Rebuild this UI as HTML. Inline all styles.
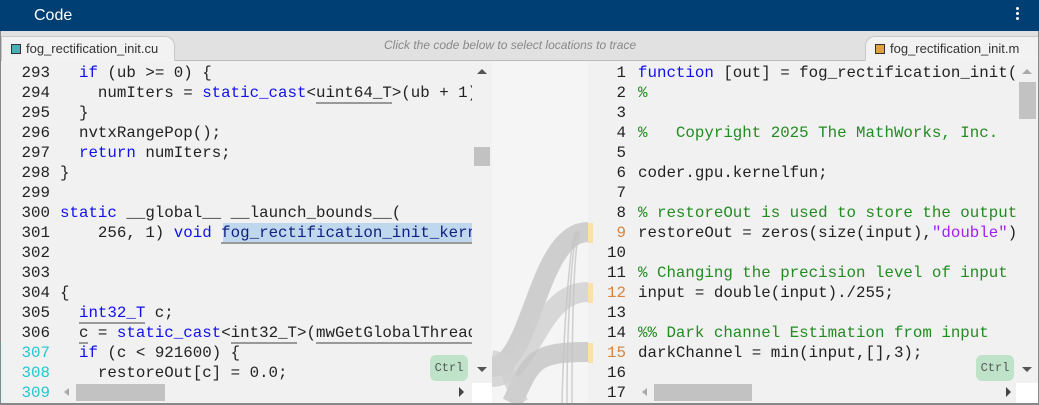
<!DOCTYPE html>
<html><head><style>
*{margin:0;padding:0;box-sizing:border-box}
body{width:1039px;height:405px;overflow:hidden;background:#f0f0f0;font-family:"Liberation Sans",sans-serif;position:relative}
.hdr{position:absolute;left:0;top:0;width:1039px;height:31px;background:#003f73;color:#fff;font-size:16px;padding:7px 0 0 34px}
.dots{position:absolute;right:20px;top:7px;width:3px}
.dots i{display:block;width:3px;height:3px;background:#fff;border-radius:50%;margin-bottom:2px}
.tabbar{position:absolute;left:0;top:31px;width:1039px;height:30px;background:#e1e1e1;border-bottom:1px solid #bbb}
.tab{position:absolute;top:36px;height:25px;background:#f2f2f2;border:1px solid #c8c8c8;border-bottom:none;border-radius:0 10px 0 0;font-size:13px;color:#333;padding:4px 0 0 9px}
.tab b{display:inline-block;width:10px;height:10px;border:1px solid #333;margin-right:5px;vertical-align:-1px}
.hint{position:absolute;left:384px;top:38px;font-size:12px;font-style:italic;color:#888}
.pane{position:absolute;top:61px;height:342px;overflow:hidden;background:#f1f1f1}
.ln{position:absolute;font-family:"Liberation Mono",monospace;font-size:15.8px;line-height:20px;white-space:pre;color:#222}
.num{text-align:right}
.k{color:#1010ee}.c{color:#228b22}.s{color:#a020f0}.o{color:#d9823b}.t{color:#20c8d0}
.u{border-bottom:2px solid #999}
.mid{position:absolute;left:492px;top:61px;width:96px;height:342px;background:#f5f5f5}
.sb{position:absolute;background:#c2c2c2}
.ctrl{position:absolute;width:38px;height:26px;background:#bfe3c8;border-radius:6px;font-family:"Liberation Mono",monospace;font-size:12px;color:#555;text-align:center;line-height:26px}
.tri{position:absolute;width:0;height:0}
</style></head><body>
<div class="hdr">Code<div class="dots"><i></i><i></i><i></i></div></div>
<div class="tabbar"></div>
<div class="tab" style="left:1px;width:174px"><b style="background:#4ab0b8"></b>fog_rectification_init.cu</div>
<div class="hint">Click the code below to select locations to trace</div>
<div class="tab" style="left:865px;width:174px;border-radius:10px 0 0 0"><b style="background:#e0a040"></b>fog_rectification_init.m</div>

<div class="pane" style="left:0;width:492px">
<div style="position:absolute;left:0;top:282px;width:4px;height:60px;background:#dff6f8"></div>
<div class="ln num" style="left:0;top:2px;width:50px">293
294
295
296
297
298
299
300
301
302
303
304
305
306
<span class="t">307
308
309</span></div>
<div style="position:absolute;left:60px;top:0;width:412px;height:322px;overflow:hidden">
<div style="position:absolute;left:163px;top:162px;width:250px;height:20px;background:#c0d8ee"></div>
<div class="ln" style="left:0;top:2px">  <span class="k">if</span> (ub &gt;= 0) {
    numIters = <span class="k">static_cast</span>&lt;<span class="u">uint64_T</span>&gt;(ub + 1);
  }
  nvtxRangePop();
  <span class="k">return</span> numIters;
}

<span class="k">static</span> __global__ __launch_bounds__(
    256, 1) <span class="k">void</span> <span class="u" style="color:#102080">fog_rectification_init_kernel</span>


{
  <span class="k u">int32_T</span> c;
  <span class="u">c</span> = <span class="k">static_cast</span>&lt;<span class="u">int32_T</span>&gt;(<span class="u">mwGetGlobalThreadIndex</span>
  <span class="k">if</span> (c &lt; 921600) {
    restoreOut[c] = 0.0;</div>
</div>
<div class="sb" style="left:474px;top:86px;width:16px;height:19px"></div>
<div class="tri" style="left:477px;top:8px;border:5px solid transparent;border-bottom:5px solid #555;border-top:none"></div>
<div class="tri" style="left:477px;top:306px;border:5px solid transparent;border-top:5px solid #555;border-bottom:none"></div>
<div style="position:absolute;left:472px;top:322px;width:20px;height:20px;background:#fff"></div>
<div class="sb" style="left:76px;top:323px;width:89px;height:17px"></div>
<div class="tri" style="left:64px;top:327px;border:4px solid transparent;border-right:5px solid #aaa;border-left:none"></div>
<div class="tri" style="left:459px;top:326px;border:5px solid transparent;border-left:5px solid #444;border-right:none"></div>
<div class="ctrl" style="left:430px;top:294px">Ctrl</div>
</div>

<div class="mid">
<svg width="96" height="342" style="position:absolute;left:0;top:0">
<g fill="none" stroke="#c4c4c4" stroke-opacity=".8">
<path d="M0 306 C40 306,45 171,96 171" stroke-width="20"/>
<path d="M0 316 C40 316,45 231,96 231" stroke-width="20" stroke="#d0d0d0"/>
<path d="M20 342 C40 300,40 291,96 291" stroke-width="20"/>
<path d="M30 342 C10 310,20 300,0 296" stroke-width="14" stroke="#cfcfcf"/>
<path d="M75 342 C75 260,80 180,86 170" stroke-width="1.5"/>
<path d="M80 342 C80 260,82 180,88 170" stroke-width="1.5"/>
<path d="M70 342 C72 260,78 180,84 172" stroke-width="1.5"/>
</g></svg>
</div>

<div class="pane" style="left:588px;width:451px">
<div style="position:absolute;left:0;top:162px;width:5px;height:20px;background:#fde0a8"></div>
<div style="position:absolute;left:0;top:222px;width:5px;height:20px;background:#fde0a8"></div>
<div style="position:absolute;left:0;top:282px;width:5px;height:20px;background:#fde0a8"></div>
<div class="ln num" style="left:0;top:2px;width:38px">1
2
3
4
5
6
7
8
<span class="o">9</span>
10
11
<span class="o">12</span>
13
14
<span class="o">15</span>
16
17</div>
<div style="position:absolute;left:50px;top:0;width:378px;height:322px;overflow:hidden">
<div class="ln" style="left:0;top:2px"><span class="k">function</span> [out] = fog_rectification_init(input)
<span class="c">%</span>

<span class="c">%   Copyright 2025 The MathWorks, Inc.</span>

coder.gpu.kernelfun;

<span class="c">% restoreOut is used to store the output</span>
restoreOut = zeros(size(input),<span class="s">"double"</span>);

<span class="c">% Changing the precision level of input</span>
input = double(input)./255;

<span class="c">%% Dark channel Estimation from input</span>
darkChannel = min(input,[],3);</div>
</div>
<div class="sb" style="left:431px;top:21px;width:17px;height:37px"></div>
<div class="tri" style="left:434px;top:8px;border:5px solid transparent;border-bottom:5px solid #aaa;border-top:none"></div>
<div class="tri" style="left:434px;top:306px;border:5px solid transparent;border-top:5px solid #555;border-bottom:none"></div>
<div style="position:absolute;left:428px;top:322px;width:23px;height:20px;background:#fff"></div>
<div class="sb" style="left:66px;top:323px;width:98px;height:17px"></div>
<div class="tri" style="left:54px;top:327px;border:4px solid transparent;border-right:5px solid #aaa;border-left:none"></div>
<div class="tri" style="left:418px;top:326px;border:5px solid transparent;border-left:5px solid #444;border-right:none"></div>
<div class="ctrl" style="left:388px;top:294px">Ctrl</div>
</div>
<div style="position:absolute;left:0;top:403px;width:1039px;height:2px;background:#888"></div>
<div style="position:absolute;left:0;top:31px;width:1px;height:374px;background:#888"></div>
<div style="position:absolute;right:0;top:31px;width:1px;height:374px;background:#888"></div>
</body></html>
